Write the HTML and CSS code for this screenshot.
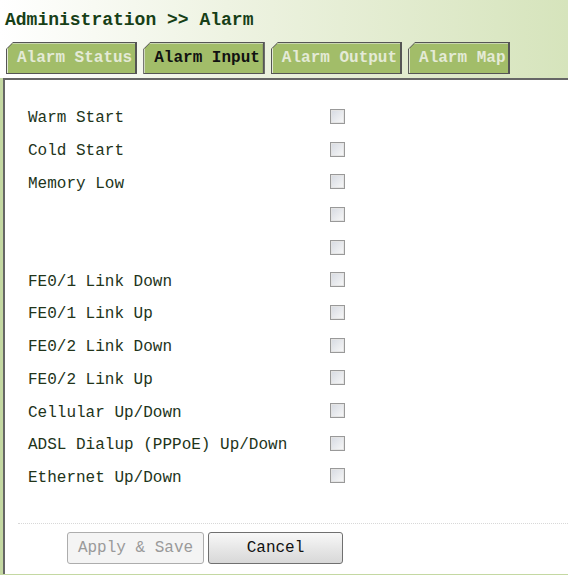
FILE: index.html
```html
<!DOCTYPE html>
<html lang="en">
<head>
    <meta charset="UTF-8">
    <title>Administration - Alarm</title>
    <link rel="stylesheet" href="styles.css">
</head>
<body>
    <div class="top">
        <h1>Administration &gt;&gt; Alarm</h1>
        <ul class="tabs">
            <li class="tab"><span>Alarm Status</span></li>
            <li class="tab active"><span>Alarm Input</span></li>
            <li class="tab"><span>Alarm Output</span></li>
            <li class="tab"><span>Alarm Map</span></li>
        </ul>
    </div>

    <div class="panel">
        <ul class="alarm-list">
            <li><label>Warm Start</label><input type="checkbox"></li>
            <li><label>Cold Start</label><input type="checkbox"></li>
            <li><label>Memory Low</label><input type="checkbox"></li>
            <li><label></label><input type="checkbox"></li>
            <li><label></label><input type="checkbox"></li>
            <li><label>FE0/1 Link Down</label><input type="checkbox"></li>
            <li><label>FE0/1 Link Up</label><input type="checkbox"></li>
            <li><label>FE0/2 Link Down</label><input type="checkbox"></li>
            <li><label>FE0/2 Link Up</label><input type="checkbox"></li>
            <li><label>Cellular Up/Down</label><input type="checkbox"></li>
            <li><label>ADSL Dialup (PPPoE) Up/Down</label><input type="checkbox"></li>
            <li><label>Ethernet Up/Down</label><input type="checkbox"></li>
        </ul>

        <div class="actions">
            <button class="btn" disabled>Apply &amp; Save</button>
            <button class="btn">Cancel</button>
        </div>
    </div>
</body>
</html>
```

FILE: styles.css
```css
body {
    margin: 0;
    padding: 0;
    font-family: "Liberation Mono", "DejaVu Sans Mono", monospace;
    background-color: #c4d8a2;
    color: #22341a;
}

.top {
    background: linear-gradient(to right, #ffffff 0%, #eef3e2 40%, #d6e4bc 100%);
    padding: 9px 0 4px 0;
}

h1 {
    margin: 0 0 0 5px;
    font-size: 18px;
    line-height: 22px;
    font-weight: bold;
    color: #173f17;
}

.tabs {
    list-style: none;
    margin: 11px 0 0 6px;
    padding: 0;
    display: flex;
    gap: 6px;
}

.tab {
    background-color: #555;
    padding: 1px 2px 1px 1px;
    clip-path: polygon(7px 0, 100% 0, 100% 100%, 0 100%, 0 7px);
}

.tab span {
    display: block;
    height: 29px;
    line-height: 29px;
    padding: 0 3px 0 9px;
    font-size: 16px;
    font-weight: bold;
    color: #e4ead6;
    background-color: #a2bd69;
    border-left: 1px solid #e2e8d6;
    border-top: 1px solid #c9d6b0;
    clip-path: polygon(6px 0, 100% 0, 100% 100%, 0 100%, 0 6px);
}

.tab.active span {
    color: #111;
}

.panel {
    margin-left: 3px;
    background-color: #fff;
    border-left: 2px solid #666;
    border-top: 2px solid #666;
    padding: 22px 0 10px 0;
}

.alarm-list {
    list-style: none;
    margin: 0;
    padding: 0 0 0 23px;
}

.alarm-list li {
    display: flex;
    align-items: center;
    height: 32.7px;
}

.alarm-list label {
    width: 302px;
    font-size: 16px;
}

.alarm-list input {
    appearance: none;
    width: 15px;
    height: 15px;
    margin: -4px 0 0 0;
    border: 1px solid #999;
    box-shadow: inset 0 0 0 1px #e4e4e4;
    background: linear-gradient(135deg, #d6dae2, #f8f8f8);
}

.actions {
    margin: 29px 0 0 13px;
    padding: 8px 0 0 49px;
    border-top: 1px dotted #d8d8d8;
    display: flex;
    gap: 4px;
}

.btn {
    font-family: "Liberation Mono", "DejaVu Sans Mono", monospace;
    font-size: 16px;
    width: 135px;
    height: 32px;
    color: #111;
    background: linear-gradient(#f8f8f8, #e4e4e4 60%, #d8d8d8);
    border: 1px solid #707070;
    border-radius: 3px;
}

.btn:disabled {
    color: #9a9a9a;
    background: #f4f4f4;
    border-color: #adadad;
    width: 137px;
}
```
